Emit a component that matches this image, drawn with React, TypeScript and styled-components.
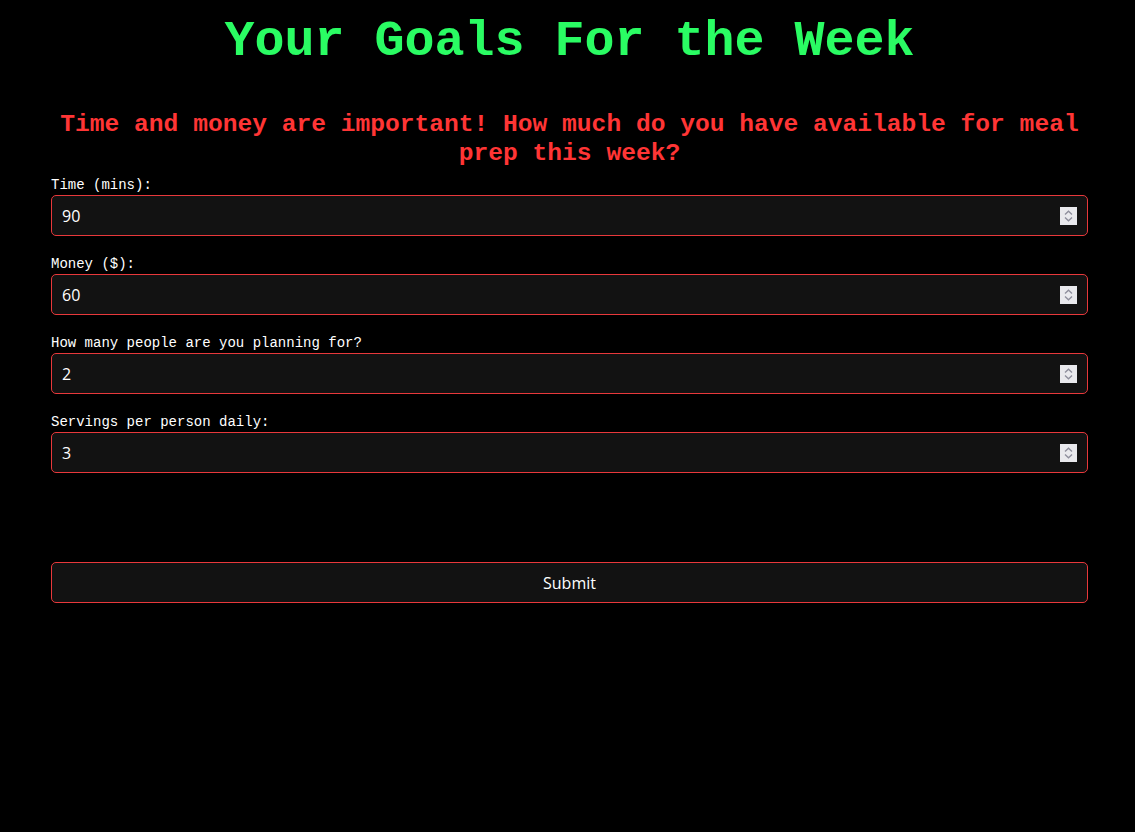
import React from "react";
import styled, { createGlobalStyle } from "styled-components";

const Global = createGlobalStyle`
  html, body { margin: 0; padding: 0; background: #000; }
  body { font-family: "Liberation Mono", "Courier New", monospace; color: #fff; }
`;

const Page = styled.main`
  padding: 0 47px 40px 51px;
  min-height: 832px;
  box-sizing: border-box;
  background: #000;
`;

const Title = styled.h1`
  margin: 13px 0 0;
  font-family: "Courier New", "Liberation Mono", monospace;
  font-weight: 700;
  font-size: 50px;
  line-height: 58px;
  color: #2afc63;
  text-align: center;
`;

const Subtitle = styled.h2`
  margin: 39px 0 9px;
  font-family: "Courier New", "Liberation Mono", monospace;
  font-weight: 700;
  font-size: 24.6px;
  line-height: 29px;
  color: #ff3535;
  text-align: center;
`;

const Form = styled.form`
  display: flex;
  flex-direction: column;
`;

const Field = styled.div`
  display: flex;
  flex-direction: column;
  gap: 2px;
  margin-bottom: 20px;
`;

const Label = styled.label`
  font-family: "Courier New", "Liberation Mono", monospace;
  font-size: 14px;
  line-height: 16px;
  color: #fff;
`;

const InputWrap = styled.div`
  position: relative;
`;

const NumberInput = styled.input`
  box-sizing: border-box;
  display: block;
  width: 100%;
  height: 41px;
  padding: 0 40px 0 10px;
  background: #121212;
  color: #fff;
  border: 1px solid #e8383b !important;
  border-radius: 5px;
  font-family: "Open Sans", "Noto Sans", sans-serif;
  font-size: 16px;
  outline: none !important;
  box-shadow: none;
  -moz-appearance: textfield;
  appearance: textfield;
  &::-webkit-inner-spin-button,
  &::-webkit-outer-spin-button {
    -webkit-appearance: none;
    margin: 0;
  }
`;

const Spinner = styled.span`
  position: absolute;
  right: 11px;
  top: 50%;
  transform: translateY(-50%);
  width: 17px;
  height: 18px;
  background: #e9e9ed;
  display: flex;
  align-items: center;
  justify-content: center;
  pointer-events: none;
`;

const SubmitButton = styled.button`
  box-sizing: border-box;
  width: 100%;
  height: 41px;
  margin-top: 69px;
  background: #121212;
  color: #fff;
  border: 1px solid #e8383b;
  border-radius: 5px;
  font-family: "Open Sans", "Noto Sans", sans-serif;
  font-size: 16px;
  cursor: pointer;
`;

const fields = [
  { id: "time", label: "Time (mins):", value: "90" },
  { id: "money", label: "Money ($):", value: "60" },
  { id: "people", label: "How many people are you planning for?", value: "2" },
  { id: "servings", label: "Servings per person daily:", value: "3" },
];

function SpinIcon() {
  return (
    <svg width="9" height="12" viewBox="0 0 9 12" fill="none" stroke="#8e8e9c" strokeWidth="1.3">
      <path d="M1 4.5 L4.5 1.2 L8 4.5" />
      <path d="M1 7.5 L4.5 10.8 L8 7.5" />
    </svg>
  );
}

export default function App() {
  return (
    <>
      <Global />
      <Page>
        <Title>Your Goals For the Week</Title>
        <Subtitle>
          Time and money are important! How much do you have available for meal prep this week?
        </Subtitle>
        <Form onSubmit={(e) => e.preventDefault()}>
          {fields.map((f) => (
            <Field key={f.id}>
              <Label htmlFor={f.id}>{f.label}</Label>
              <InputWrap>
                <NumberInput id={f.id} type="number" defaultValue={f.value} />
                <Spinner aria-hidden="true">
                  <SpinIcon />
                </Spinner>
              </InputWrap>
            </Field>
          ))}
          <SubmitButton type="submit">Submit</SubmitButton>
        </Form>
      </Page>
    </>
  );
}
